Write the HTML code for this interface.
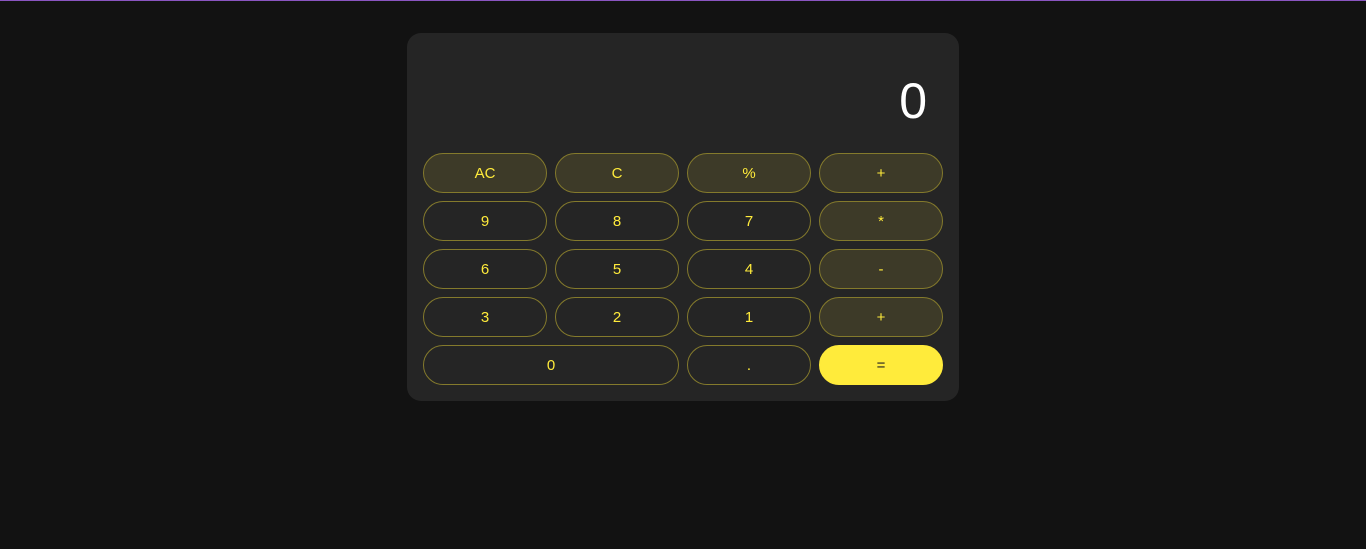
<!DOCTYPE html>
<html><head><style>
body{margin:0;background:#121212;width:1366px;height:549px;overflow:hidden;border-top:1px solid #8a55c0;box-sizing:border-box;font-family:"Liberation Sans",sans-serif}
.calc{position:absolute;left:407px;top:33px;width:552px;height:368px;background:#252525;border-radius:14px}
.disp{position:absolute;right:32px;top:40px;font-size:50px;color:#fff;line-height:56px}
.grid{position:absolute;left:16px;top:120px;display:grid;grid-template-columns:repeat(4,124px);grid-auto-rows:40px;gap:8px}
.b{border:1px solid #847a2c;border-radius:20px;box-sizing:border-box;color:#ffeb3b;font-size:15px;display:flex;align-items:center;justify-content:center;background:#252525}
.o{background:#3d3a28}
.eq{background:#ffeb3b;border-color:#ffeb3b;color:#222}
.w{grid-column:span 2}
</style></head><body>
<div class="calc"><div class="disp">0</div>
<div class="grid">
<div class="b o">AC</div><div class="b o">C</div><div class="b o">%</div><div class="b o">+</div>
<div class="b">9</div><div class="b">8</div><div class="b">7</div><div class="b o">*</div>
<div class="b">6</div><div class="b">5</div><div class="b">4</div><div class="b o">-</div>
<div class="b">3</div><div class="b">2</div><div class="b">1</div><div class="b o">+</div>
<div class="b w">0</div><div class="b">.</div><div class="b eq">=</div>
</div></div>
</body></html>
